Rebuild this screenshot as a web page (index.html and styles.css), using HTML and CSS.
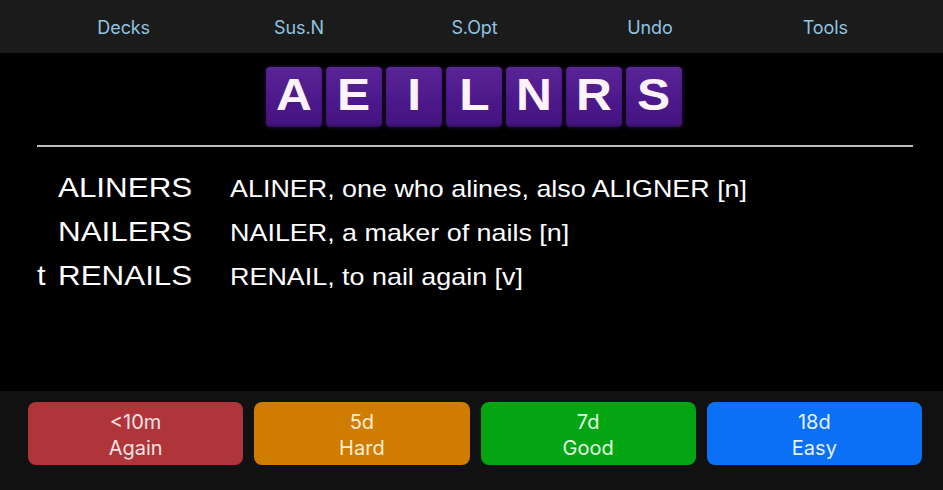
FILE: index.html
```html
<!DOCTYPE html>
<html>
<head>
<meta charset="utf-8">
<link rel="stylesheet" href="styles.css">
</head>
<body>
<div class="app">
  <nav class="topbar">
    <span class="nav-item">Decks</span>
    <span class="nav-item">Sus.N</span>
    <span class="nav-item">S.Opt</span>
    <span class="nav-item">Undo</span>
    <span class="nav-item">Tools</span>
  </nav>
  <main class="card">
    <div class="tiles">
      <span class="tile"><span class="letter">A</span></span>
      <span class="tile"><span class="letter">E</span></span>
      <span class="tile"><span class="letter">I</span></span>
      <span class="tile"><span class="letter">L</span></span>
      <span class="tile"><span class="letter">N</span></span>
      <span class="tile"><span class="letter">R</span></span>
      <span class="tile"><span class="letter">S</span></span>
    </div>
    <hr class="divider">
    <div class="answers">
      <div class="row">
        <span class="hook"></span>
        <span class="word">ALINERS</span>
        <span class="def">ALINER, one who alines, also ALIGNER [n]</span>
      </div>
      <div class="row">
        <span class="hook"></span>
        <span class="word">NAILERS</span>
        <span class="def">NAILER, a maker of nails [n]</span>
      </div>
      <div class="row">
        <span class="hook">t</span>
        <span class="word">RENAILS</span>
        <span class="def">RENAIL, to nail again [v]</span>
      </div>
    </div>
  </main>
  <footer class="answer-bar">
    <button class="btn btn-again"><span>&lt;10m</span><span>Again</span></button>
    <button class="btn btn-hard"><span>5d</span><span>Hard</span></button>
    <button class="btn btn-good"><span>7d</span><span>Good</span></button>
    <button class="btn btn-easy"><span>18d</span><span>Easy</span></button>
  </footer>
</div>
</body>
</html>
```
FILE: styles.css
```css
* { box-sizing: border-box; }
html, body {
  margin: 0;
  padding: 0;
  background: #000;
  width: 943px;
  height: 490px;
  overflow: hidden;
  font-family: "Liberation Sans", Arial, sans-serif;
}
.app {
  display: flex;
  flex-direction: column;
  height: 490px;
}
.topbar {
  height: 53px;
  background: #1b1b1b;
  display: grid;
  grid-template-columns: repeat(5, 1fr);
  align-items: center;
  padding: 2px 30px 0 36px;
}
.nav-item {
  text-align: center;
  color: #90c4e0;
  font-family: "Inter", "Liberation Sans", sans-serif;
  font-size: 18px;
  letter-spacing: -0.1px;
}
.card {
  flex: 1;
  display: flex;
  flex-direction: column;
  padding-top: 14px;
}
.tiles {
  display: flex;
  justify-content: center;
  gap: 4px;
  margin-left: 5px;
}
.tile {
  width: 56px;
  height: 60px;
  border-radius: 4px;
  background: linear-gradient(#5a2596, #4b188a 60%, #44147e);
  box-shadow: 0 0 4px rgba(120, 60, 200, 0.35), inset 0 -2px 2px rgba(0,0,0,0.25);
  display: flex;
  align-items: center;
  justify-content: center;
  padding-bottom: 4px;
}
.letter {
  color: #fff3fb;
  font-weight: bold;
  font-size: 44px;
  line-height: 1;
  display: inline-block;
  transform: scaleX(1.13);
}
.divider {
  border: none;
  height: 2px;
  background: #bdbdbd;
  margin: 18px 30px 0 37px;
}
.answers {
  display: flex;
  flex-direction: column;
  padding-top: 25px;
}
.row {
  display: grid;
  grid-template-columns: 21px 134px 1fr;
  padding-left: 37px;
  height: 44px;
  align-items: baseline;
  justify-items: start;
  color: #fff;
}
.hook {
  font-size: 28px;
  display: inline-block;
  transform: scaleX(1.1);
  transform-origin: left;
}
.word {
  font-size: 28px;
  display: inline-block;
  white-space: nowrap;
  transform: scaleX(1.12);
  transform-origin: left;
}
.def {
  font-size: 24px;
  padding-left: 34px;
  display: inline-block;
  white-space: nowrap;
  transform: scaleX(1.12);
  transform-origin: left;
}
.answer-bar {
  height: 99px;
  background: #111;
  display: flex;
  gap: 11px;
  padding: 11px 21px 0 28px;
  align-items: flex-start;
}
.btn {
  flex: 1;
  height: 63px;
  border: none;
  border-radius: 8px;
  display: flex;
  flex-direction: column;
  align-items: center;
  justify-content: center;
  font-family: "Inter", "Liberation Sans", sans-serif;
  font-size: 20px;
  line-height: 26px;
  padding: 3px 0 0;
}
.btn-again { background: #b0353b; color: #f6e3e3; }
.btn-hard { background: #d07c00; color: #fbeed5; }
.btn-good { background: #03a512; color: #e4fbe2; }
.btn-easy { background: #0a70f5; color: #e6f1ff; }
```
